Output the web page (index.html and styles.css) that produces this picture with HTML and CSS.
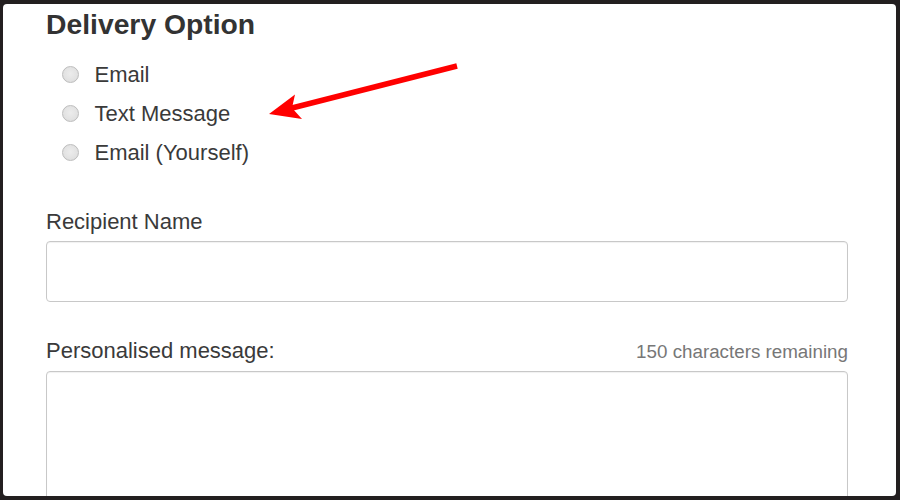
FILE: index.html
```html
<!DOCTYPE html>
<html lang="en">
<head>
<meta charset="utf-8">
<title>Delivery Option</title>
<link rel="stylesheet" href="styles.css">
</head>
<body>
<div class="frame">
  <div class="sheet">
    <h2 class="title">Delivery Option</h2>
    <div class="options">
      <label class="option"><input type="radio" name="delivery" class="radio"><span>Email</span></label>
      <label class="option"><input type="radio" name="delivery" class="radio"><span>Text Message</span></label>
      <label class="option"><input type="radio" name="delivery" class="radio"><span>Email (Yourself)</span></label>
    </div>
    <div class="field recipient">
      <label class="label">Recipient Name</label>
      <input type="text" class="control">
    </div>
    <div class="field message">
      <div class="label-row">
        <label class="label">Personalised message:</label>
        <span class="remaining">150 characters remaining</span>
      </div>
      <textarea class="control area"></textarea>
    </div>
    <svg class="arrow" width="900" height="500" viewBox="0 0 900 500" aria-hidden="true">
      <line x1="457" y1="66" x2="290" y2="108.5" stroke="#ff0000" stroke-width="5.5" stroke-linecap="butt"/>
      <polygon points="269,114 295,94.5 292,108 302,119" fill="#ff0000"/>
    </svg>
  </div>
</div>
</body>
</html>
```

FILE: styles.css
```css
html, body {
  margin: 0;
  padding: 0;
  background: #231f20;
}
.frame {
  width: 900px;
  height: 500px;
  box-sizing: border-box;
  padding: 4px 4px 4px 3px;
}
.sheet {
  position: relative;
  height: 100%;
  background: #ffffff;
  border-radius: 4px;
  overflow: hidden;
  box-sizing: border-box;
  padding: 4.2px 48px 0 43px;
  font-family: "Liberation Sans", Arial, sans-serif;
  color: #333333;
}
.title {
  margin: 0;
  font-size: 28.3px;
  line-height: 32px;
  font-weight: bold;
  color: #333333;
}
.options {
  margin-top: 15px;
  display: flex;
  flex-direction: column;
}
.option {
  display: flex;
  align-items: center;
  height: 39px;
  font-size: 22px;
  line-height: 39px;
  color: #3a3a3a;
}
.radio {
  -webkit-appearance: none;
  appearance: none;
  margin: 0 16px 0 15.5px;
  width: 17px;
  height: 17px;
  border-radius: 50%;
  border: 1.5px solid #bdbdbd;
  background: radial-gradient(circle at 50% 45%, #ececec 0%, #e2e2e2 60%, #d6d6d6 100%);
  box-sizing: border-box;
  flex: none;
}
.field {
  display: flex;
  flex-direction: column;
}
.recipient {
  margin-top: 36.5px;
}
.message {
  margin-top: 35.5px;
}
.label {
  font-size: 22px;
  line-height: 26px;
  color: #3a3a3a;
}
.label-row {
  display: flex;
  justify-content: space-between;
  align-items: baseline;
}
.remaining {
  font-size: 18.8px;
  color: #777777;
}
.control {
  display: block;
  box-sizing: border-box;
  width: 802px;
  height: 61px;
  margin: 6.5px 0 0 0;
  padding: 6px 12px;
  border: 1.5px solid #c8c8c8;
  border-radius: 4px;
  background: #ffffff;
  box-shadow: inset 0 1px 1px rgba(0, 0, 0, 0.06);
  font-family: "Liberation Sans", Arial, sans-serif;
  font-size: 18px;
  outline: none;
}
.area {
  margin-top: 7.5px;
  height: 160px;
  resize: none;
}
.arrow {
  position: absolute;
  left: -3px;
  top: -4px;
  pointer-events: none;
}
```
